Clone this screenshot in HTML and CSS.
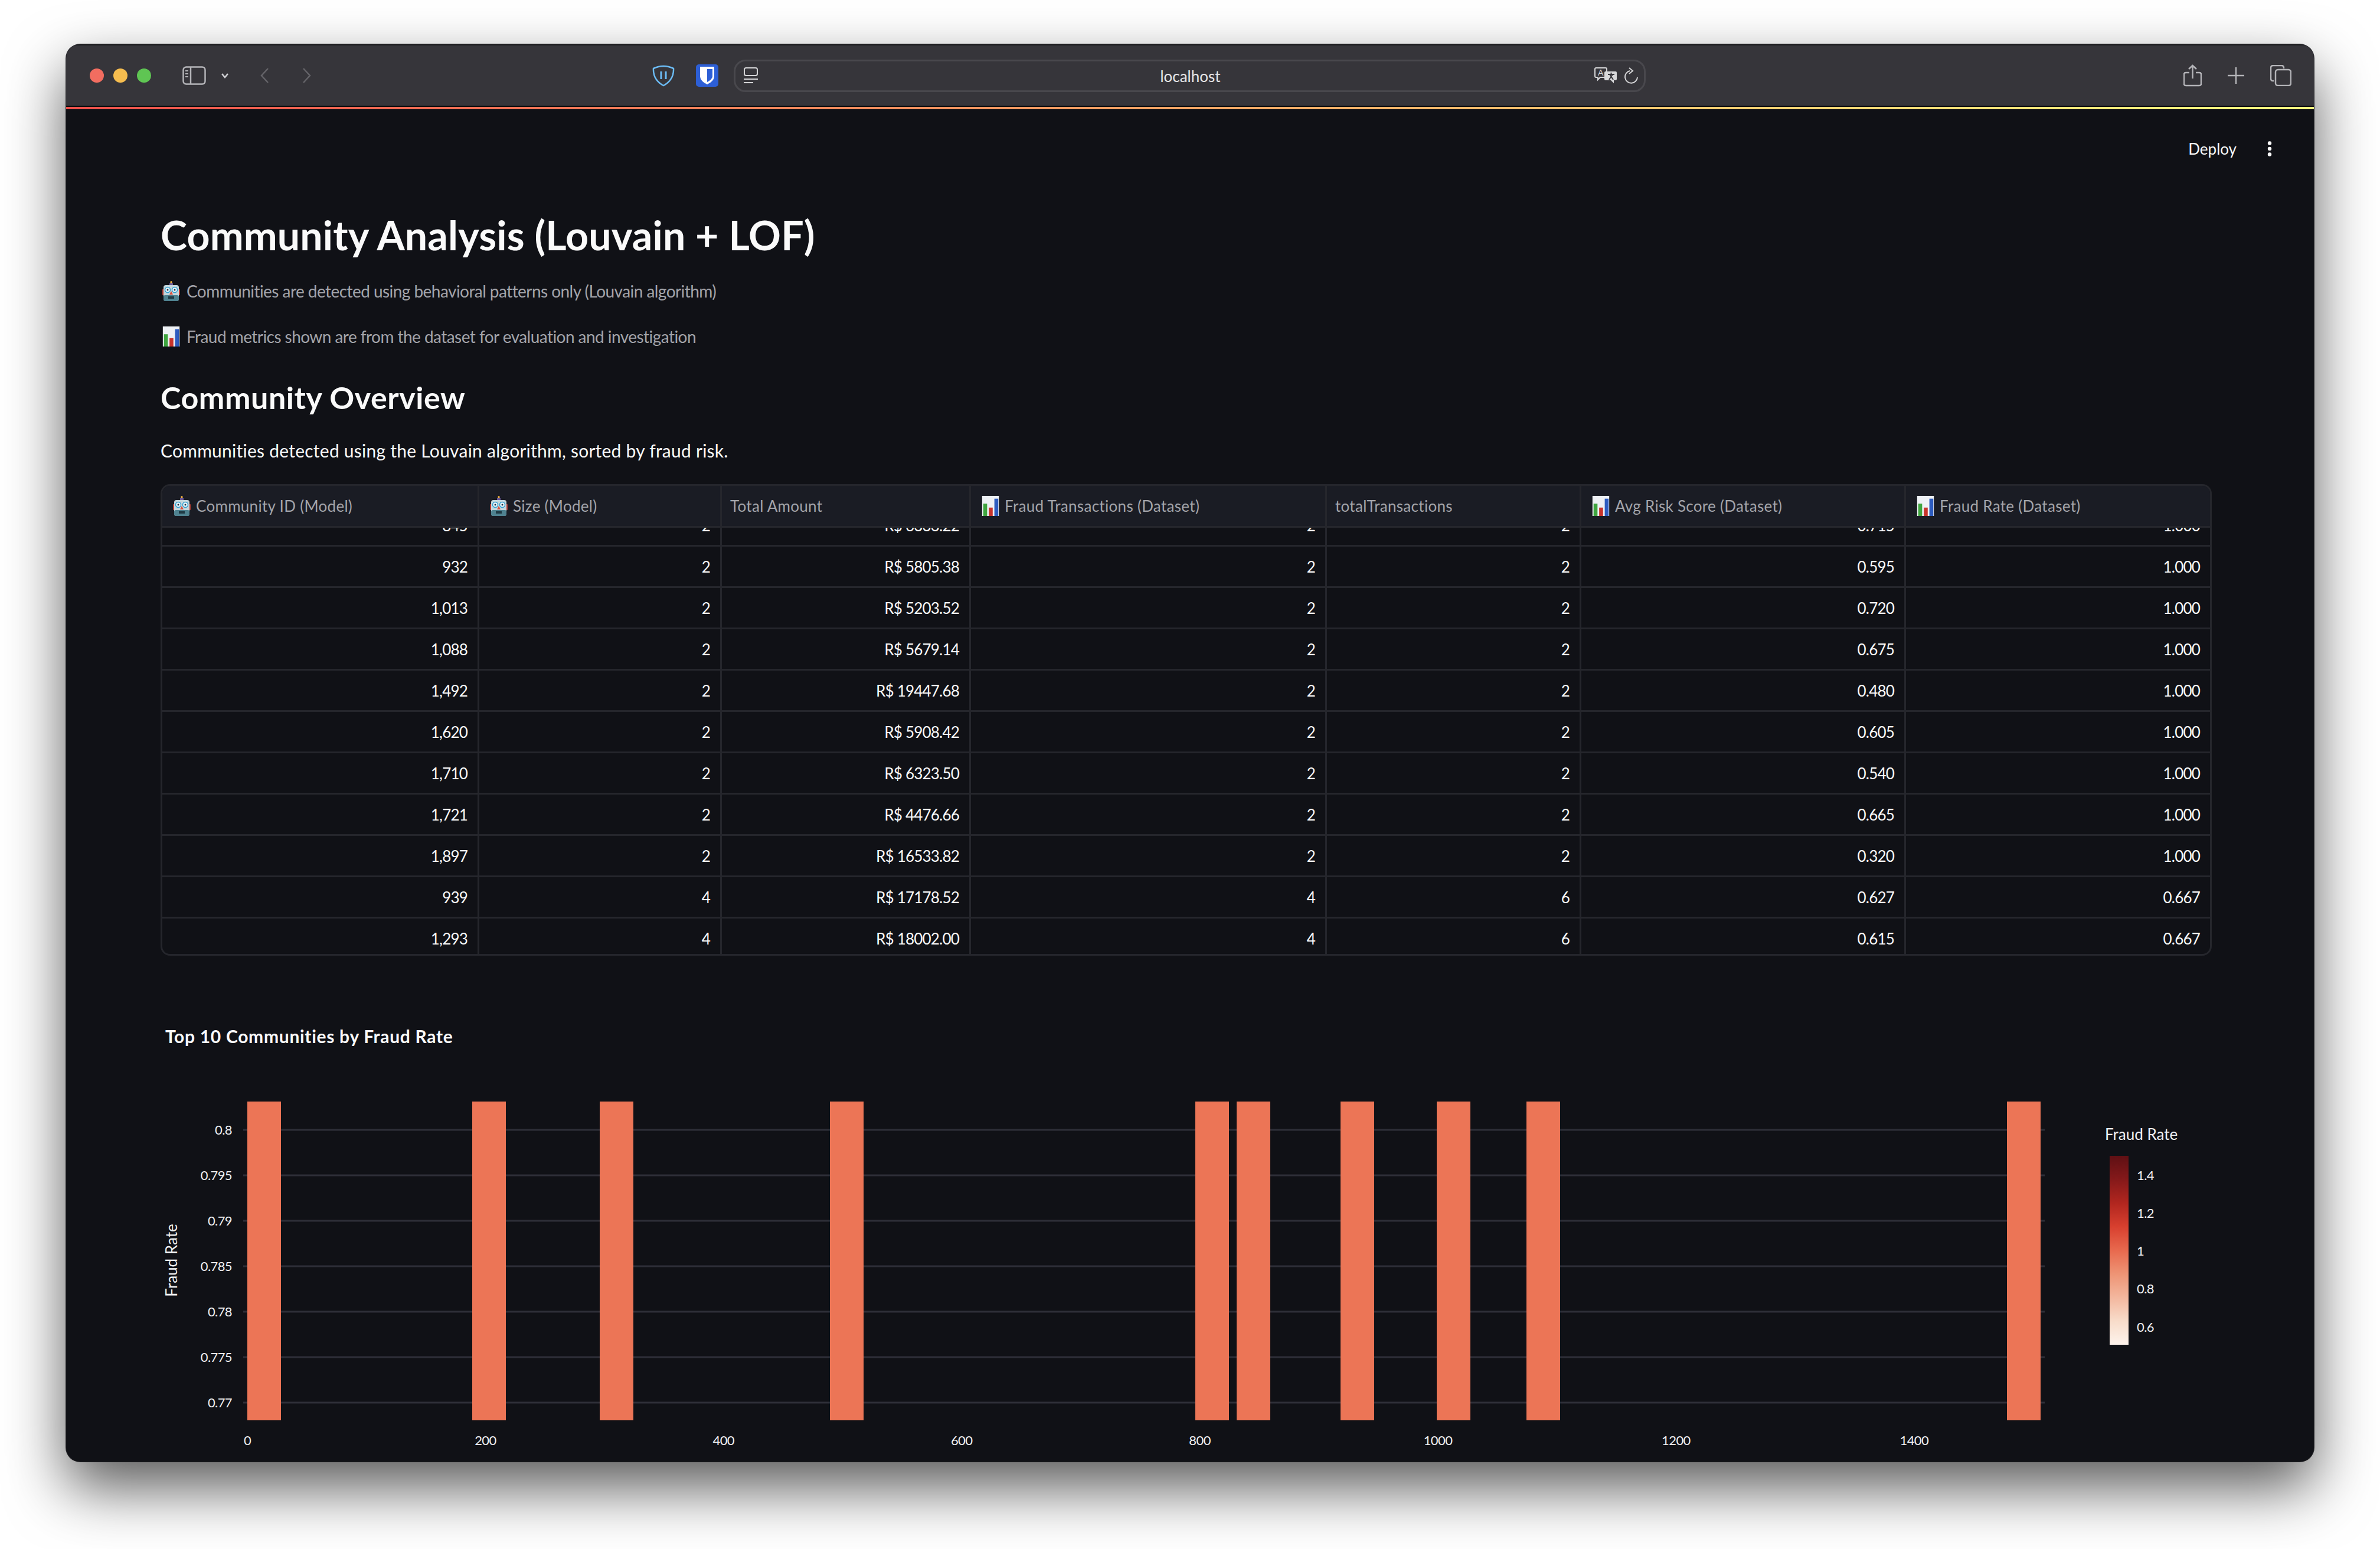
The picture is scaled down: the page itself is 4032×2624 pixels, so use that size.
FILE: index.html
```html
<!DOCTYPE html>
<html lang="en">
<head>
    <meta charset="UTF-8">
    <meta name="viewport" content="width=device-width, initial-scale=1.0">
    <title>Community Analysis</title>
    <link rel="stylesheet" href="styles.css">
</head>
<body>
    <svg class="defs" width="0" height="0">
        <symbol id="robot" viewBox="0 0 30 34">
            <rect x="13.5" y="0" width="3" height="6" rx="1.5" fill="#f0b040"/>
            <rect x="12" y="4" width="6" height="4" fill="#6a5a9a"/>
            <rect x="0" y="14" width="3" height="10" rx="1" fill="#b03a30"/>
            <rect x="27" y="14" width="3" height="10" rx="1" fill="#b03a30"/>
            <rect x="2" y="7" width="26" height="27" rx="4" fill="#c4d6dc"/>
            <rect x="2" y="24" width="26" height="10" rx="3" fill="#4f8290"/>
            <circle cx="9" cy="15" r="4.5" fill="#e8f4f8" stroke="#2f9fd0" stroke-width="1.5"/>
            <circle cx="21" cy="15" r="4.5" fill="#e8f4f8" stroke="#2f9fd0" stroke-width="1.5"/>
            <circle cx="9" cy="15" r="1.5" fill="#234"/>
            <circle cx="21" cy="15" r="1.5" fill="#234"/>
            <path d="M15 17l3 6h-6z" fill="#d8503c"/>
            <rect x="10" y="26" width="10" height="4" fill="#1f3a44"/>
        </symbol>
        <symbol id="barchart" viewBox="0 0 30 36">
            <rect width="30" height="36" fill="#eef1f5"/>
            <rect x="2" y="14" width="7" height="22" fill="#3fa53f"/>
            <rect x="12" y="21" width="7" height="15" fill="#c8332b"/>
            <rect x="22" y="5" width="7" height="31" fill="#2d5cc0"/>
        </symbol>
    </svg>

    <div class="window">
        <!-- Safari toolbar -->
        <div class="toolbar">
            <span class="light red"></span>
            <span class="light yellow"></span>
            <span class="light green"></span>
            <svg class="tb-icon sidebar-icon" width="40" height="32" viewBox="0 0 40 32" fill="none" stroke="#b4b4b8" stroke-width="2.5">
                <rect x="1.5" y="1.5" width="37" height="29" rx="5"/>
                <path d="M14 2v28"/>
                <path d="M5 8h5M5 13h5M5 18h5" stroke-width="2"/>
            </svg>
            <svg class="tb-icon chevron-icon" width="14" height="10" viewBox="0 0 14 10" fill="none" stroke="#d0d0d4" stroke-width="2.5">
                <path d="M2 2l5 6 5-6"/>
            </svg>
            <svg class="tb-icon back-icon" width="16" height="28" viewBox="0 0 16 28" fill="none" stroke="#646368" stroke-width="2.5">
                <path d="M14 2L3 14l11 12"/>
            </svg>
            <svg class="tb-icon forward-icon" width="16" height="28" viewBox="0 0 16 28" fill="none" stroke="#646368" stroke-width="2.5">
                <path d="M2 2l11 12L2 26"/>
            </svg>
            <svg class="tb-icon shield-icon" width="38" height="38" viewBox="0 0 38 38" fill="none" stroke="#6cbcf5" stroke-width="2.5">
                <path d="M2 7Q19-1 36 7Q37 26 19 36Q1 26 2 7z"/>
                <path d="M15 12v13M23 12v13" stroke-width="3"/>
            </svg>
            <svg class="tb-icon bitwarden-icon" width="38" height="38" viewBox="0 0 38 38">
                <rect width="38" height="38" rx="5" fill="#2d5fd6"/>
                <path d="M7 4h24v17q-1 8-12 13Q8 29 7 21z" fill="#fff"/>
                <path d="M19 8h9v13q-1 5-9 9z" fill="#2d5fd6"/>
            </svg>
            <div class="urlbar">
                <svg class="reader-icon" width="24" height="28" viewBox="0 0 24 28" fill="none" stroke="#d4d4d6" stroke-width="2">
                    <rect x="1" y="1" width="22" height="13" rx="3"/>
                    <path d="M0 20h24M0 26h16"/>
                </svg>
                <span class="url-text">localhost</span>
                <svg class="translate-icon" width="38" height="28" viewBox="0 0 38 28">
                    <path d="M3 1h16q2 0 2 2v12q0 2-2 2H10l-4 4v-4H3q-2 0-2-2V3q0-2 2-2z" fill="#36353a" stroke="#d4d4d6" stroke-width="2"/>
                    <text x="6" y="14" class="translate-a">A</text>
                    <path d="M19 7h17q2 0 2 2v11q0 2-2 2h-3v5l-5-5h-9q-2 0-2-2V9q0-2 2-2z" fill="#d8d8da"/>
                    <path d="M23 12h11M28.5 9v3M25 21l6-9M32 21l-6-9" stroke="#36353a" stroke-width="2" fill="none"/>
                </svg>
                <svg class="reload-icon" width="24" height="28" viewBox="0 0 24 28" fill="none" stroke="#d4d4d6" stroke-width="2">
                    <path d="M9 6a10.5 10.5 0 1 0 13 11"/>
                    <path d="M8 1l6 5-6 5"/>
                </svg>
            </div>
            <svg class="tb-icon share-icon" width="31" height="38" viewBox="0 0 31 38" fill="none" stroke="#b4b4b8" stroke-width="2.5">
                <path d="M10 14H4q-3 0-3 3v16q0 3 3 3h23q3 0 3-3V17q0-3-3-3h-6"/>
                <path d="M15.500 24V2M9 8l6.500-6L22 8"/>
            </svg>
            <svg class="tb-icon plus-icon" width="28" height="28" viewBox="0 0 28 28" stroke="#b4b4b8" stroke-width="2.500">
                <path d="M14 0v28M0 14h28"/>
            </svg>
            <svg class="tb-icon tabs-icon" width="36" height="36" viewBox="0 0 36 36" fill="none" stroke="#b4b4b8" stroke-width="2.500">
                <path d="M6 27H5q-4 0-4-4V5q0-4 4-4h14q4 0 4 4v1"/>
                <rect x="9" y="8" width="26" height="27" rx="4"/>
            </svg>
        </div>
        <div class="rainbow"></div>

        <div class="app">
            <div class="app-header">
                <span class="deploy">Deploy</span>
                <svg class="kebab" width="8" height="26" viewBox="0 0 8 26" fill="#fafafa">
                    <circle cx="4" cy="3.500" r="3.200"/>
                    <circle cx="4" cy="13" r="3.200"/>
                    <circle cx="4" cy="22.500" r="3.200"/>
                </svg>
            </div>

            <h1>Community Analysis (Louvain + LOF)</h1>
            <p class="caption first"><svg class="emoji"><use href="#robot"/></svg>Communities are detected using behavioral patterns only (Louvain algorithm)</p>
            <p class="caption"><svg class="emoji"><use href="#barchart"/></svg>Fraud metrics shown are from the dataset for evaluation and investigation</p>
            <h2>Community Overview</h2>
            <p class="lead">Communities detected using the Louvain algorithm, sorted by fraud risk.</p>

            <div class="table">
                <div class="row head">
                    <div class="cell"><svg class="emoji"><use href="#robot"/></svg>Community ID (Model)</div>
                    <div class="cell"><svg class="emoji"><use href="#robot"/></svg>Size (Model)</div>
                    <div class="cell">Total Amount</div>
                    <div class="cell"><svg class="emoji"><use href="#barchart"/></svg>Fraud Transactions (Dataset)</div>
                    <div class="cell">totalTransactions</div>
                    <div class="cell"><svg class="emoji"><use href="#barchart"/></svg>Avg Risk Score (Dataset)</div>
                    <div class="cell"><svg class="emoji"><use href="#barchart"/></svg>Fraud Rate (Dataset)</div>
                </div>
                <div class="rows" id="rows"></div>
            </div>

            <div class="chart-title">Top 10 Communities by Fraud Rate</div>

            <!-- Plotly style chart, drawn on a free canvas -->
            <svg class="chart" id="chart" width="3640" height="640" viewBox="0 0 3640 640">
                <defs>
                    <linearGradient id="reds" x1="0" y1="0" x2="0" y2="1">
                        <stop offset="0" stop-color="#5f1014"/>
                        <stop offset="0.125" stop-color="#85191a"/>
                        <stop offset="0.25" stop-color="#b1261f"/>
                        <stop offset="0.375" stop-color="#d8402f"/>
                        <stop offset="0.5" stop-color="#e8694e"/>
                        <stop offset="0.625" stop-color="#ee9475"/>
                        <stop offset="0.75" stop-color="#f3b79e"/>
                        <stop offset="0.875" stop-color="#f8dcca"/>
                        <stop offset="1" stop-color="#fdf3ec"/>
                    </linearGradient>
                </defs>
            </svg>
        </div>
    </div>

    <script>
        // Table rows, the first one is scrolled half out of view
        const data = [
            ["845", "2", "R$ 6333.22", "2", "2", "0.715", "1.000"],
            ["932", "2", "R$ 5805.38", "2", "2", "0.595", "1.000"],
            ["1,013", "2", "R$ 5203.52", "2", "2", "0.720", "1.000"],
            ["1,088", "2", "R$ 5679.14", "2", "2", "0.675", "1.000"],
            ["1,492", "2", "R$ 19447.68", "2", "2", "0.480", "1.000"],
            ["1,620", "2", "R$ 5908.42", "2", "2", "0.605", "1.000"],
            ["1,710", "2", "R$ 6323.50", "2", "2", "0.540", "1.000"],
            ["1,721", "2", "R$ 4476.66", "2", "2", "0.665", "1.000"],
            ["1,897", "2", "R$ 16533.82", "2", "2", "0.320", "1.000"],
            ["939", "4", "R$ 17178.52", "4", "6", "0.627", "0.667"],
            ["1,293", "4", "R$ 18002.00", "4", "6", "0.615", "0.667"]
        ];
        const rows = document.getElementById("rows");
        data.forEach(r => {
            const row = document.createElement("div");
            row.className = "row";
            r.forEach(v => {
                const cell = document.createElement("div");
                cell.className = "cell";
                cell.textContent = v;
                row.appendChild(cell);
            });
            rows.appendChild(row);
        });

        // Chart, coordinates are page coordinates minus the svg origin
        const chart = document.getElementById("chart");
        const NS = "http://www.w3.org/2000/svg";
        function add(tag, attrs, text) {
            const el = document.createElementNS(NS, tag);
            Object.keys(attrs).forEach(k => el.setAttribute(k, attrs[k]));
            if (text !== undefined) el.textContent = text;
            chart.appendChild(el);
        }
        const X0 = 272, Y0 = 1800;

        ["0.8", "0.795", "0.79", "0.785", "0.78", "0.775", "0.77"].forEach((t, i) => {
            const y = 1914 + i * 77 - Y0;
            add("line", { x1: 412 - X0, x2: 3464 - X0, y1: y, y2: y, class: "grid" });
            add("text", { x: 393 - X0, y: y + 8, class: "tick end" }, t);
        });

        [419, 800, 1016, 1406, 2025, 2095, 2271, 2434, 2586, 3400].forEach(x => {
            add("rect", { x: x - X0, y: 1866 - Y0, width: 57, height: 540, class: "bar" });
        });

        [0, 200, 400, 600, 800, 1000, 1200, 1400].forEach((t, i) => {
            add("text", { x: 419 + i * 403.4 - X0, y: 2448 - Y0, class: "tick mid" }, t);
        });

        add("text", { x: 0, y: 0, class: "axis-title mid", transform: "translate(" + (300 - X0) + " " + (2135 - Y0) + ") rotate(-90)" }, "Fraud Rate");
        add("text", { x: 3566 - X0, y: 1931 - Y0, class: "axis-title" }, "Fraud Rate");
        add("rect", { x: 3574 - X0, y: 1958 - Y0, width: 32, height: 320, fill: "url(#reds)" });
        [["1.4", 1991], ["1.2", 2055], ["1", 2119], ["0.8", 2183], ["0.6", 2248]].forEach(t => {
            add("text", { x: 3620 - X0, y: t[1] + 8 - Y0, class: "tick" }, t[0]);
        });
    </script>
</body>
</html>
```

FILE: styles.css
```css
html, body {
    margin: 0;
    padding: 0;
    height: 100%;
}

body {
    background-color: #fff;
    font-family: Lato, "Noto Sans", sans-serif;
    overflow: hidden;
}

.defs {
    display: block;
    height: 0;
}

.window {
    margin: 75px 112px 0;
    height: 2401px;
    border-radius: 24px;
    overflow: hidden;
    background-color: #101116;
    box-shadow: 0 44px 100px rgba(0, 0, 0, 0.65), 0 0 0 1px #3a3a3e;
    display: flex;
    flex-direction: column;
}

/* Toolbar */
.toolbar {
    height: 106px;
    flex: none;
    box-sizing: border-box;
    background-color: #36353a;
    border-top: 2px solid #1c1c1f;
    border-bottom: 2px solid #0a0a0c;
    padding-left: 40px;
    display: flex;
    align-items: center;
}

.light {
    width: 24px;
    height: 24px;
    border-radius: 50%;
    margin-right: 16px;
}

.red { background-color: #f26d60; }
.yellow { background-color: #f6bd4f; }
.green { background-color: #5fc553; }

.tb-icon { flex: none; }
.sidebar-icon { margin-left: 37px; }
.chevron-icon { margin-left: 25px; }
.back-icon { margin-left: 52px; }
.forward-icon { margin-left: 56px; }
.shield-icon { margin-left: 577px; }
.bitwarden-icon { margin-left: 36px; }

.urlbar {
    margin-left: 26px;
    width: 1545px;
    height: 55px;
    flex: none;
    box-sizing: border-box;
    border: 3px solid #49484d;
    border-radius: 20px;
    display: flex;
    align-items: center;
    padding: 0 9px 0 14px;
}

.url-text {
    flex: 1;
    text-align: center;
    color: #e6e6e8;
    font-size: 26px;
    padding-left: 48px;
    padding-top: 2px;
}

.translate-icon { margin-right: 13px; }
.translate-a { font-size: 14px; fill: #d4d4d6; }

.share-icon { margin-left: 911px; }
.plus-icon { margin-left: 44px; }
.tabs-icon { margin-left: 44px; }

.rainbow {
    height: 4px;
    flex: none;
    background: linear-gradient(90deg, #f0524c, #fffd80);
}

/* Streamlit app */
.app {
    flex: 1;
    padding: 0 173px 0 160px;
    position: relative;
    color: #fafafa;
}

.app-header {
    height: 134px;
    display: flex;
    justify-content: flex-end;
    align-items: center;
    margin-right: -102px;
    box-sizing: border-box;
}

.deploy {
    font-size: 26px;
    margin-right: 52px;
}

h1 {
    margin: 0;
    padding-top: 34px;
    font-size: 68px;
    line-height: 90px;
    font-weight: 700;
    letter-spacing: 0.15px;
    color: #fafafa;
}

.caption {
    margin: 0;
    font-size: 28px;
    line-height: 40px;
    letter-spacing: -0.55px;
    color: #a3a4aa;
    display: flex;
    align-items: center;
}

.caption.first { margin-top: 30px; }
.caption + .caption { margin-top: 37px; }

.emoji {
    width: 30px;
    height: 34px;
    margin-left: 3px;
    margin-right: 11px;
    flex: none;
}

h2 {
    margin: 48px 0 0;
    font-size: 52px;
    line-height: 70px;
    font-weight: 700;
    letter-spacing: 0.55px;
    color: #fafafa;
}

.lead {
    margin: 35px 0 0;
    font-size: 30px;
    line-height: 40px;
    letter-spacing: 0.25px;
}

/* Table */
.table {
    margin-top: 37px;
    height: 799px;
    border: 3px solid #25262c;
    border-radius: 16px;
    overflow: hidden;
    box-sizing: border-box;
}

.row {
    display: grid;
    grid-template-columns: 537px 411px 422px 603px 431px 550px 1fr;
    height: 70px;
    box-sizing: border-box;
    border-bottom: 3px solid #25262c;
}

.cell {
    border-right: 3px solid #25262c;
    padding: 0 17px;
    display: flex;
    align-items: center;
    justify-content: flex-end;
    font-size: 26px;
    letter-spacing: -0.8px;
    white-space: nowrap;
    overflow: hidden;
}

.cell:last-child { border-right: none; }

.head {
    height: 71px;
    background-color: #1a1c24;
    color: #a3a4aa;
    position: relative;
    z-index: 1;
}

.head .cell {
    justify-content: flex-start;
    padding: 0 14px;
    letter-spacing: 0.3px;
}

.head .emoji {
    margin-left: 4px;
    margin-right: 9px;
}

.rows {
    margin-top: -38px;
}

/* Chart */
.chart-title {
    margin-top: 116px;
    padding-left: 8px;
    font-size: 30px;
    line-height: 40px;
    font-weight: 700;
    letter-spacing: 0.7px;
}

.chart {
    display: block;
    margin-top: 25px;
    overflow: visible;
}

.grid {
    stroke: #2e2f38;
    stroke-width: 3;
}

.bar {
    fill: #ec7556;
}

.tick {
    font-size: 22px;
    fill: #f0f0f2;
    letter-spacing: -0.6px;
}

.axis-title {
    font-size: 26px;
    fill: #f0f0f2;
}

.end { text-anchor: end; }
.mid { text-anchor: middle; }
```
